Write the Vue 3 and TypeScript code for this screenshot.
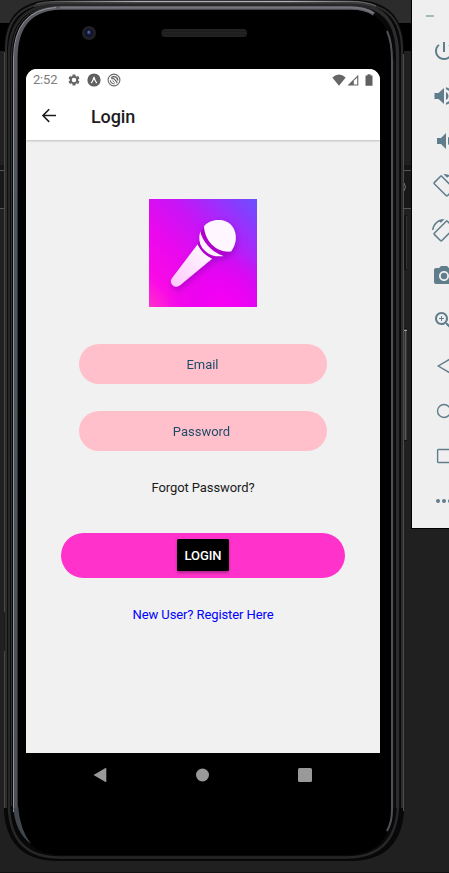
<script setup lang="ts">
import { ref } from 'vue'

interface Tool {
  name: string
  path: string
  outline?: boolean
  flip?: boolean
}

const rotateArt =
  'M16.48 2.52c3.27 1.55 5.61 4.72 5.97 8.48h1.5C23.44 4.84 18.29 0 12 0l-.66.03 3.81 3.81 1.33-1.32zM10.23 1.75c-.59-.59-1.54-.59-2.12 0L1.75 8.11c-.59.59-.59 1.54 0 2.12l12.02 12.02c.59.59 1.54.59 2.12 0l6.36-6.36c.59-.59.59-1.54 0-2.12L10.23 1.75zm4.6 19.44L2.81 9.17l6.36-6.36 12.02 12.02-6.36 6.36z'

const tools: Tool[] = [
  { name: 'Power', path: 'M13 3h-2v10h2V3zm4.83 2.17l-1.42 1.42C17.99 7.86 19 9.81 19 12c0 3.87-3.13 7-7 7s-7-3.13-7-7c0-2.19 1.01-4.14 2.58-5.42L6.17 5.17C4.23 6.82 3 9.26 3 12c0 4.97 4.03 9 9 9s9-4.03 9-9c0-2.74-1.23-5.18-3.17-6.83z' },
  { name: 'Volume up', path: 'M2.5 9v6h4l5.5 5V4L6.5 9h-4zm14 3c0-1.77-1.02-3.29-2.5-4.03v8.05c1.48-.73 2.5-2.25 2.5-4.02zM14 3.23v2.06c2.89.86 5 3.54 5 6.71s-2.11 5.85-5 6.71v2.06c4.01-.91 7-4.49 7-8.77s-2.99-7.86-7-8.77z' },
  { name: 'Volume down', path: 'M18.5 12c0-1.77-1.02-3.29-2.5-4.03v8.05c1.48-.73 2.5-2.25 2.5-4.02zM5 9v6h4l5 5V4L9 9H5z' },
  { name: 'Rotate left', path: rotateArt },
  { name: 'Rotate right', path: rotateArt, flip: true },
  { name: 'Screenshot', path: 'M12 8.8a3.2 3.2 0 1 0 0 6.4 3.2 3.2 0 0 0 0-6.4zM9 2L7.17 4H4c-1.1 0-2 .9-2 2v12c0 1.1.9 2 2 2h16c1.1 0 2-.9 2-2V6c0-1.1-.9-2-2-2h-3.170L15 2H9zm3 15c-2.76 0-5-2.24-5-5s2.240-5 5-5 5 2.240 5 5-2.240 5-5 5z' },
  { name: 'Zoom', path: 'M15.5 14h-.79l-.28-.27C15.410 12.590 16 11.110 16 9.500 16 5.910 13.090 3 9.500 3S3 5.910 3 9.500 5.910 16 9.500 16c1.610 0 3.090-.59 4.230-1.570l.27.28v.79l5 4.990L20.490 19l-4.990-5zm-6 0C7.010 14 5 11.990 5 9.500S7.010 5 9.500 5 14 7.010 14 9.500 11.990 14 9.500 14zm.5-7H9v2H7v1h2v2h1v-2h2V9h-2V7z' },
  { name: 'Back', path: 'M18 5 6.300 12 18 19z', outline: true },
  { name: 'Home', path: 'M12 5.500a6.500 6.500 0 1 0 0 13 6.500 6.500 0 0 0 0-13z', outline: true },
  { name: 'Overview', path: 'M6.300 5.500h12.400v13H6.300a.7.7 0 0 1-.7-.7V6.200a.7.700 0 0 1 .7-.7z', outline: true },
  { name: 'More', path: 'M6 10a2 2 0 1 0 0 4 2 2 0 0 0 0-4zm6 0a2 2 0 1 0 0 4 2 2 0 0 0 0-4zm6 0a2 2 0 1 0 0 4 2 2 0 0 0 0-4z' },
]

const email = ref('')
const password = ref('')
</script>

<template>
  <div class="desktop">
    <svg class="device-art" width="449" height="873" viewBox="0 0 449 873" aria-hidden="true">
      <defs>
        <linearGradient id="topEdge" x1="0" x2="1">
          <stop offset="0" stop-color="#444" />
          <stop offset=".3" stop-color="#b0aeb6" />
          <stop offset=".75" stop-color="#b4b2ba" />
          <stop offset="1" stop-color="#555" />
        </linearGradient>
        <linearGradient id="leftRim" x1="0" x2="0" y1="0" y2="1">
          <stop offset="0" stop-color="#5c5c64" />
          <stop offset=".1" stop-color="#56565e" />
          <stop offset=".3" stop-color="#4c575e" />
          <stop offset="1" stop-color="#4e5258" />
        </linearGradient>
      </defs>
      <rect width="449" height="873" fill="#202020" />
      <rect width="449" height="23" fill="#2c2c2c" />
      <rect y="23" width="449" height="28" fill="#000" />
      <rect y="165" width="449" height="5" fill="#151515" />
      <rect y="170" width="449" height="38" fill="#181818" />
      <path d="M0 170.500H411M0 208.500H411" stroke="#555" />
      <path d="M404 183q3 4 0 8" fill="none" stroke="#777" />
      <rect x="403" y="215" width="4" height="55" fill="#111" />
      <path d="M406.500 216v53" stroke="#333" />
      <path d="M403.500 272v4" stroke="#666" />
      <rect x="403" y="328" width="4" height="113" fill="#111" />
      <path d="M405.500 329v111" stroke="#5b5b5b" stroke-width="2" />
      <path d="M403 330.500h4" stroke="#999" />
      <rect y="872" width="449" height="1" fill="#111" />

      <path d="M4 50Q4 0 54 0H354Q404 0 404 50V812Q400 861 350 861H58Q8 861 4 812z" fill="#080808" />
      <path d="M4.500 808V52" stroke="#4a4a4a" />
      <path d="M4.500 612v39" stroke="#1c1c1c" />
      <path d="M6 808V50Q6 3 54 3H354Q402 3 402 50V808" fill="none" stroke="#2c2c2c" stroke-width="2" />
      <path d="M36 4Q45 1.500 60 1.500H350Q366 1.500 376 6" fill="none" stroke="url(#topEdge)" stroke-width="1.500" />
      <path d="M34 6Q44 3.500 60 3.500H350Q366 3.500 376 8" fill="none" stroke="#3a3a3c" stroke-width="2" />
      <path d="M9 808V56Q9 5 58 5H350Q398 5 398 56V806Q396 857.500 346 857.500H60Q11 857.500 9 808z" fill="none" stroke="#272727" stroke-width="2.500" />
      <path d="M18 60Q18 9 64 9H346Q393 9 393 60V806Q392 855 344 855H62Q18 855 18 806z" fill="#000" />
      <path d="M11.500 806V56Q12 7 58 6.500" fill="none" stroke="#333" />
      <path d="M397.500 808V56Q397 14 370 7" fill="none" stroke="#2c2c2e" stroke-width="3" />
      <path d="M403.500 811V54" stroke="#4c4c4c" />
      <path d="M15.800 808V58Q16 9 60 8H350Q366 8 374 14" fill="none" stroke="url(#leftRim)" stroke-width="3.500" />
      <path d="M60 7.500H350Q365 7.500 373 13" fill="none" stroke="#77747e" stroke-width="2" />
      <path d="M13.500 812V58Q14 10 56 7.500" fill="none" stroke="#92949c" />
      <path d="M13.500 808Q15 832 31 844Q20 830 18 806z" fill="#41464c" />
      <path d="M387 31Q392 42 392 60V810Q392 822 387 831" fill="none" stroke="#515058" stroke-width="2" />
      <path d="M394 60V808" stroke="#18181b" />

      <circle cx="89" cy="33" r="7" fill="#202024" />
      <circle cx="89" cy="33" r="4.200" fill="#11142c" />
      <circle cx="89" cy="32.500" r="2" fill="#2e3d78" />
      <circle cx="88.500" cy="32" r=".8" fill="#7c88b8" />
      <rect x="161.500" y="29" width="85.500" height="8" rx="3.500" fill="#222" />
      <path d="M163 31.500H246M163 34.500H246" stroke="#151515" stroke-dasharray="1 1" />
    </svg>

    <section class="phone">
      <main class="screen">
        <header class="top">
          <div class="status">
            <span class="clock">2:52</span>
            <svg class="gear" width="14" height="14" viewBox="0 0 24 24" fill="#666"><path fill-rule="evenodd" d="M19.140 12.940c.04-.3.060-.61.060-.94 0-.32-.02-.64-.07-.94l2.030-1.580a.49.49 0 0 0 .12-.61l-1.920-3.320a.49.49 0 0 0-.59-.22l-2.390.96c-.5-.38-1.030-.7-1.620-.94l-.36-2.540A.48.48 0 0 0 13.920 2.400h-3.840c-.24 0-.43.17-.47.41l-.36 2.540c-.59.24-1.130.57-1.620.94l-2.390-.96c-.22-.08-.47 0-.59.22L2.740 8.870c-.12.21-.08.470.12.61l2.030 1.580c-.05.3-.09.63-.09.94s.02.64.07.94l-2.030 1.580a.49.49 0 0 0-.12.61l1.920 3.320c.12.22.37.290.59.22l2.390-.96c.5.38 1.030.7 1.620.94l.36 2.540c.05.24.24.41.48.41h3.840c.24 0 .44-.17.47-.41l.36-2.540c.59-.24 1.130-.56 1.620-.94l2.390.96c.22.080.470 0 .59-.22l1.920-3.320c.12-.22.070-.470-.12-.61l-2.010-1.580zM12 15.800a3.800 3.800 0 1 1 0-7.600 3.800 3.800 0 0 1 0 7.600z" /></svg>
            <svg class="expo" width="14" height="14" viewBox="0 0 14 14"><circle cx="7" cy="7" r="6.600" fill="#606060" /><path d="M3.700 10Q5.900 6.600 6.300 4.200Q7 3 7.700 4.200Q8.100 6.600 10.300 10Q9.500 10.800 8.800 9.800L7 6.600L5.200 9.800Q4.500 10.800 3.700 10z" fill="#fff" /></svg>
            <svg width="14" height="14" viewBox="0 0 14 14" fill="none" stroke="#6a6a6a"><circle cx="7" cy="7" r="5.900" stroke-width="1.100" /><path d="M3.300 7.200A3.700 3.700 0 0 0 7.600 10.700" stroke-width="1.100" /><path d="M4.300 4.800A3.600 3.600 0 0 1 10.600 7.600" stroke-width="1.500" /><path d="M4.200 5.600L6.500 5.400 9.800 8.900V10.200" stroke-width="1.300" /><path d="M5.600 7.600L7.600 9.400" stroke-width="1" /></svg>
            <svg class="wifi" width="14" height="12" viewBox="0 0 14 12"><path d="M.3 3.600Q7-2.600 13.700 3.600L7 11.700z" fill="#666" /></svg>
            <svg class="signal" width="12" height="12" viewBox="0 0 12 12"><path d="M.5 11.500L11.300.8V11.500z" fill="#666" /><path d="M6.800 6.700L10.200 3.400V10.400H6.800z" fill="#fff" /></svg>
            <svg width="8" height="12" viewBox="0 0 8 12"><path d="M.5 1.500H2.500V.2h3v1.300h2V11.800H.5z" fill="#606060" /></svg>
          </div>
          <div class="bar">
            <svg width="16" height="16" viewBox="0 0 16 16" fill="none" stroke="#1c1c1e" stroke-width="1.500"><path d="M15 7.600H2M8.200 1.300L1.900 7.600L8.200 13.900" /></svg>
            <h1>Login</h1>
          </div>
        </header>

        <form class="login" @submit.prevent>
          <svg class="logo" width="108" height="108" viewBox="0 0 108 108" role="img" aria-label="Microphone">
            <defs>
              <linearGradient id="base" x1="1" y1="0" x2="0" y2="1">
                <stop offset="0" stop-color="#6a50ff" />
                <stop offset=".2" stop-color="#9a30fc" />
                <stop offset=".4" stop-color="#c814f6" />
                <stop offset=".62" stop-color="#ea08ee" />
                <stop offset=".85" stop-color="#fa0ae6" />
                <stop offset="1" stop-color="#ff30cc" />
              </linearGradient>
              <radialGradient id="glow" cx=".68" cy="1" r=".55">
                <stop offset="0" stop-color="#f800f4" />
                <stop offset=".4" stop-color="#ef00f3" stop-opacity=".8" />
                <stop offset="1" stop-color="#e000f0" stop-opacity="0" />
              </radialGradient>
              <linearGradient id="handle" x1="1" y1="0" x2="0" y2="1">
                <stop offset="0" stop-color="#fff" />
                <stop offset="1" stop-color="#ffc6fc" />
              </linearGradient>
              <filter id="soft" x="-30%" y="-30%" width="160%" height="160%">
                <feDropShadow dx="1" dy="3" stdDeviation="3" flood-color="#7a00a8" flood-opacity=".5" />
              </filter>
            </defs>
            <rect width="108" height="108" fill="url(#base)" />
            <rect width="108" height="108" fill="url(#glow)" />
            <g filter="url(#soft)">
              <path d="M55 28L52 33L50 42L49 46Q53 55 63 59.500L74 57L82 52z" fill="#b000cb" />
              <path d="M55 27.500C60 20 76 18 83 27C88.500 34 88 45 82 52.500C68 54 56 43 55 27.500z" fill="#fff6ff" />
              <path d="M51.300 32.500C53 41 61 52.500 74.500 57C62 59 56 52.500 53 48.500Q48.500 42 51.300 32.500z" fill="#fff2ff" />
              <path d="M48.500 45.500Q53 55 63 59.800L31 86.200Q26.500 89.500 23 85.500Q20.500 82 23.500 78.500z" fill="url(#handle)" />
            </g>
          </svg>
          <input v-model="email" class="field" type="text" placeholder="Email" />
          <input v-model="password" class="field second" type="password" placeholder="Password" />
          <a class="forgot">Forgot Password?</a>
          <div class="pill"><button class="submit" type="submit">LOGIN</button></div>
          <a class="register">New User? Register Here</a>
        </form>
      </main>

      <nav class="keys">
        <svg width="14" height="16" viewBox="0 0 14 16"><path d="M.5 8L12.500 1Q13.300.8 13.300 1.500V14.500Q13.300 15.300 12.500 15z" fill="#999" /></svg>
        <svg width="14" height="14" viewBox="0 0 14 14"><circle cx="7.500" cy="7" r="6.500" fill="#999" /></svg>
        <svg width="14" height="14" viewBox="0 0 14 14"><rect width="14" height="14" rx="1.500" fill="#999" /></svg>
      </nav>
    </section>

    <aside class="toolbar">
      <span class="minimize"></span>
      <svg
        v-for="tool in tools"
        :key="tool.name"
        class="tool"
        :class="{ outline: tool.outline, flip: tool.flip }"
        width="24"
        height="24"
        viewBox="0 0 24 24"
        :aria-label="tool.name"
      >
        <path :d="tool.path" />
      </svg>
    </aside>
  </div>
</template>

<style>
body {
  overflow: hidden;
  background: #202020;
}
</style>

<style scoped>
.desktop {
  position: relative;
  display: flex;
  align-items: flex-start;
  width: 449px;
  height: 873px;
  overflow: hidden;
  font-family: Roboto, "Liberation Sans", sans-serif;
}
.desktop svg {
  display: block;
  flex: none;
}
.device-art {
  position: absolute;
  inset: 0;
}
.phone {
  position: relative;
  flex: none;
  box-sizing: border-box;
  width: 411px;
  padding: 69px 31px 0 26px;
}
.screen {
  height: 684px;
  overflow: hidden;
  border-radius: 11px 11px 0 0;
  background: #f1f1f1;
}
.top {
  box-sizing: border-box;
  height: 71px;
  background: #fff;
  box-shadow: 0 1px 2px rgba(0, 0, 0, 0.22);
}
.status {
  display: flex;
  align-items: center;
  height: 22px;
  padding: 0 7px;
}
.clock {
  width: 34px;
  color: #7c7c7c;
  font-size: 13px;
  line-height: 22px;
  letter-spacing: -0.2px;
}
.expo {
  margin: 0 6px;
}
.wifi {
  margin-left: auto;
}
.signal {
  margin: 0 6px 0 1px;
}
.bar {
  display: flex;
  align-items: center;
  gap: 34px;
  height: 50px;
  padding-left: 15px;
}
h1 {
  margin: 0;
  padding-top: 2px;
  color: #1c1c1e;
  font-size: 18px;
  font-weight: 500;
  line-height: 24px;
  letter-spacing: -0.1px;
}
.login {
  display: flex;
  flex-direction: column;
  align-items: center;
  padding-top: 59px;
}
.field {
  box-sizing: border-box;
  width: 248px;
  height: 40.5px;
  margin-top: 36.5px;
  padding: 1px 1px 0 0;
  border: 0;
  border-radius: 21px;
  outline: 0;
  background: #ffc0cb;
  color: #003f5c;
  font: 13px/20px Roboto, "Liberation Sans", sans-serif;
  letter-spacing: -0.05px;
  text-align: center;
}
.second {
  margin-top: 26.5px;
  padding-right: 3px;
  letter-spacing: 0;
}
.field::placeholder {
  color: #003f5c;
  opacity: 0.9;
}
.forgot,
.register {
  font-size: 13px;
  line-height: 20px;
  letter-spacing: -0.1px;
}
.forgot {
  margin-top: 26.5px;
  color: #1a1a1a;
}
.pill {
  display: flex;
  align-items: center;
  justify-content: center;
  width: 283.5px;
  height: 45px;
  margin-top: 35px;
  border-radius: 23px;
  background: #ff33cc;
}
.submit {
  width: 52px;
  height: 32px;
  padding: 1px 0 0;
  border: 0;
  border-radius: 1.5px;
  background: #000;
  box-shadow: 0 2px 3px rgba(0, 0, 0, 0.3);
  color: #fff;
  font: 500 13px/20px Roboto, "Liberation Sans", sans-serif;
  letter-spacing: -0.1px;
}
.register {
  margin-top: 27px;
  color: #0000ff;
}
.keys {
  display: flex;
  align-items: center;
  justify-content: space-between;
  height: 44px;
  padding: 0 68.500px 0 66.500px;
}
.toolbar {
  position: relative;
  display: flex;
  flex: none;
  flex-direction: column;
  align-items: flex-start;
  gap: 21px;
  box-sizing: border-box;
  width: 38px;
  height: 529px;
  overflow: hidden;
  border-left: 1px solid #000;
  border-bottom: 1px solid #000;
  background: #efefef;
  padding: 15px 0 0 20px;
}
.minimize {
  flex: none;
  width: 8px;
  height: 2px;
  margin: 0 0 1px -6px;
  background: #a5b8be;
}
.tool {
  fill: #607d8b;
}
.outline {
  fill: none;
  stroke: #607d8b;
  stroke-width: 1.4;
}
.flip {
  transform: scaleX(-1);
}
</style>
